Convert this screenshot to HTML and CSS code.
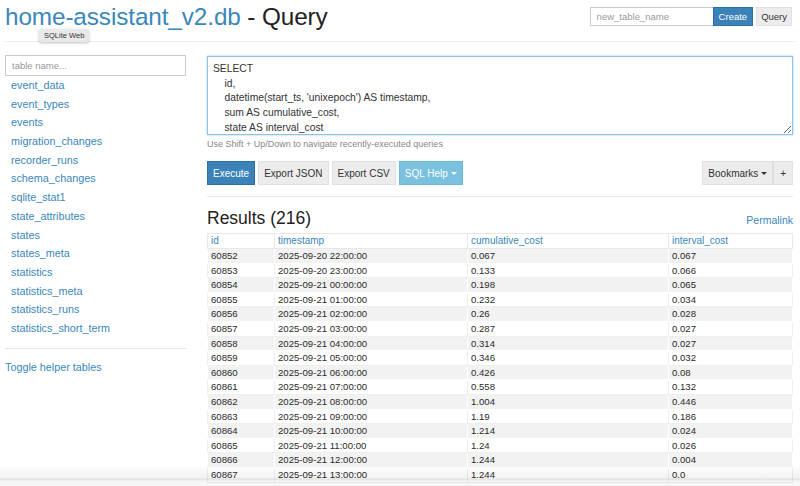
FILE: index.html
```html
<!DOCTYPE html>
<html>
<head>
<meta charset="utf-8">
<link rel="stylesheet" href="styles.css">
</head>
<body>
<header class="topbar">
  <div class="title-wrap">
    <h1 class="title"><a class="db" href="#">home-assistant_v2.db</a> - Query</h1>
    <span class="tooltip">SQLite Web</span>
  </div>
  <form class="create-form">
    <input class="new-table" type="text" placeholder="new_table_name">
    <button type="button" class="btn btn-primary btn-sm">Create</button>
    <button type="button" class="btn btn-default btn-sm query">Query</button>
  </form>
</header>
<div class="layout">
  <aside class="sidebar">
    <input class="filter" type="text" placeholder="table name...">
    <ul class="tables">
      <li><a href="#">event_data</a></li>
      <li><a href="#">event_types</a></li>
      <li><a href="#">events</a></li>
      <li><a href="#">migration_changes</a></li>
      <li><a href="#">recorder_runs</a></li>
      <li><a href="#">schema_changes</a></li>
      <li><a href="#">sqlite_stat1</a></li>
      <li><a href="#">state_attributes</a></li>
      <li><a href="#">states</a></li>
      <li><a href="#">states_meta</a></li>
      <li><a href="#">statistics</a></li>
      <li><a href="#">statistics_meta</a></li>
      <li><a href="#">statistics_runs</a></li>
      <li><a href="#">statistics_short_term</a></li>
    </ul>
    <hr class="side-rule">
    <a class="toggle" href="#">Toggle helper tables</a>
  </aside>
  <main class="main">
    <div class="sql-box">
      <textarea class="sql">SELECT
    id,
    datetime(start_ts, 'unixepoch') AS timestamp,
    sum AS cumulative_cost,
    state AS interval_cost</textarea>
    </div>
    <p class="hint">Use Shift + Up/Down to navigate recently-executed queries</p>
    <div class="toolbar">
      <div class="btn-row">
        <button type="button" class="btn btn-primary">Execute</button>
        <button type="button" class="btn btn-default">Export JSON</button>
        <button type="button" class="btn btn-default">Export CSV</button>
        <button type="button" class="btn btn-info">SQL Help <span class="caret"></span></button>
      </div>
      <div class="btn-group">
        <button type="button" class="btn btn-default">Bookmarks <span class="caret dark"></span></button>
        <button type="button" class="btn btn-default plus">+</button>
      </div>
    </div>
    <hr class="main-rule">
    <div class="results-head">
      <h3 class="results">Results (216)</h3>
      <a class="permalink" href="#">Permalink</a>
    </div>
    <table class="grid">
      <thead>
        <tr><th class="c1">id</th><th class="c2">timestamp</th><th class="c3">cumulative_cost</th><th>interval_cost</th></tr>
      </thead>
      <tbody>
        <tr><td>60852</td><td>2025-09-20 22:00:00</td><td>0.067</td><td>0.067</td></tr>
        <tr><td>60853</td><td>2025-09-20 23:00:00</td><td>0.133</td><td>0.066</td></tr>
        <tr><td>60854</td><td>2025-09-21 00:00:00</td><td>0.198</td><td>0.065</td></tr>
        <tr><td>60855</td><td>2025-09-21 01:00:00</td><td>0.232</td><td>0.034</td></tr>
        <tr><td>60856</td><td>2025-09-21 02:00:00</td><td>0.26</td><td>0.028</td></tr>
        <tr><td>60857</td><td>2025-09-21 03:00:00</td><td>0.287</td><td>0.027</td></tr>
        <tr><td>60858</td><td>2025-09-21 04:00:00</td><td>0.314</td><td>0.027</td></tr>
        <tr><td>60859</td><td>2025-09-21 05:00:00</td><td>0.346</td><td>0.032</td></tr>
        <tr><td>60860</td><td>2025-09-21 06:00:00</td><td>0.426</td><td>0.08</td></tr>
        <tr><td>60861</td><td>2025-09-21 07:00:00</td><td>0.558</td><td>0.132</td></tr>
        <tr><td>60862</td><td>2025-09-21 08:00:00</td><td>1.004</td><td>0.446</td></tr>
        <tr><td>60863</td><td>2025-09-21 09:00:00</td><td>1.19</td><td>0.186</td></tr>
        <tr><td>60864</td><td>2025-09-21 10:00:00</td><td>1.214</td><td>0.024</td></tr>
        <tr><td>60865</td><td>2025-09-21 11:00:00</td><td>1.24</td><td>0.026</td></tr>
        <tr><td>60866</td><td>2025-09-21 12:00:00</td><td>1.244</td><td>0.004</td></tr>
        <tr><td>60867</td><td>2025-09-21 13:00:00</td><td>1.244</td><td>0.0</td></tr>
      </tbody>
    </table>
  </main>
</div>
<div class="window-edge"></div>
</body>
</html>
```
FILE: styles.css
```css
* { box-sizing: border-box; }
html, body { margin: 0; padding: 0; background: #fff; overflow: hidden; }
body {
  font-family: "Liberation Sans", Arial, sans-serif;
  font-size: 10.5px;
  color: #333;
  width: 800px;
  height: 486px;
  position: relative;
}
a { color: #3a87b9; text-decoration: none; }

.topbar {
  display: flex;
  justify-content: space-between;
  align-items: flex-start;
  margin: 0 5px;
  height: 42px;
  border-bottom: 1px solid #eee;
}
.title-wrap { position: relative; }
.title {
  margin: 0;
  padding-top: 3px;
  font-weight: normal;
  font-size: 24.3px;
  line-height: 28px;
  color: #222;
  letter-spacing: -0.1px;
}
.title .db { color: #3a87b9; }
.tooltip {
  position: absolute;
  left: 34px;
  top: 29px;
  background: #e9e9e9;
  color: #333;
  font-size: 7.5px;
  padding: 2px 5px;
  border-radius: 2px;
  box-shadow: 0 1px 3px rgba(0,0,0,0.25);
  white-space: nowrap;
}
.create-form {
  display: flex;
  align-items: center;
  margin-top: 7px;
  margin-right: 3px;
}
.new-table {
  width: 123px;
  height: 19px;
  border: 1px solid #ccc;
  border-right: none;
  font: inherit;
  font-size: 9.5px;
  padding: 0 6px;
  color: #555;
}
.new-table::placeholder, .filter::placeholder { color: #999; }
.btn {
  font-family: inherit;
  font-size: 10px;
  border: 1px solid #e0e0e0;
  border-radius: 0;
  height: 24px;
  padding: 0 5px;
  color: #333;
  background: #eee;
  cursor: pointer;
  white-space: nowrap;
}
.btn-sm { height: 19px; font-size: 9.5px; padding: 0 5px; }
.btn-sm.query { padding: 0 4px; }
.btn-primary { background: #3a82b8; border-color: #2e6f9f; color: #fff; }
.btn-default { background: #ececec; border-color: #e2e2e2; }
.btn-info { background: #79c1de; border-color: #6bb8d8; color: #fff; }
.create-form .btn-primary { margin-right: 3px; }

.caret {
  display: inline-block;
  width: 0; height: 0;
  border-left: 3px solid transparent;
  border-right: 3px solid transparent;
  border-top: 3.5px solid #fff;
  vertical-align: 2px;
  margin-left: 0;
}
.caret.dark { border-top-color: #333; }

.layout {
  display: grid;
  grid-template-columns: 181px 586px;
  column-gap: 21px;
  margin: 0 5px;
  padding-top: 13px;
}
.sidebar { display: flex; flex-direction: column; }
.filter {
  width: 181px;
  height: 21px;
  border: 1px solid #ccc;
  font: inherit;
  font-size: 9.5px;
  padding: 0 6px;
}
.tables { list-style: none; margin: 0; padding: 0 0 0 6px; }
.tables li { height: 18.7px; line-height: 18.7px; font-size: 10.8px; }
.side-rule { border: 0; border-top: 1px solid #e6e6e6; margin: 10px 0 0; width: 181px; }
.toggle { margin-top: 12px; font-size: 10.8px; }

.main { display: flex; flex-direction: column; }
.sql-box {
  border: 1px solid #8fc3e6;
  box-shadow: 0 0 2px rgba(102,175,233,0.7);
  height: 79px;
  margin-top: 1px;
}
.sql {
  display: block;
  width: 100%;
  height: 100%;
  border: 0;
  outline: none;
  resize: vertical;
  font-family: "Liberation Sans", Arial, sans-serif;
  font-size: 10.3px;
  line-height: 14.7px;
  color: #333;
  padding: 5px 5px 2px;
  overflow: hidden;
}
.hint { margin: 3px 0 0; font-size: 9px; color: #888; line-height: 12px; }
.toolbar {
  display: flex;
  justify-content: space-between;
  margin-top: 11px;
}
.btn-row { display: flex; gap: 3px; }
.btn-group { display: flex; }
.btn-group .plus { padding: 0 6px; border-left: 1px solid #ddd; }
.main-rule { border: 0; border-top: 1px solid #e8e8e8; margin: 11px 0 0; }
.results-head {
  display: flex;
  justify-content: space-between;
  align-items: baseline;
  margin-top: 11px;
}
.results { margin: 0; font-weight: normal; font-size: 17.5px; line-height: 20px; color: #222; }
.permalink { font-size: 10.5px; }

.grid {
  margin-top: 5px;
  width: 586px;
  border-collapse: collapse;
  font-size: 9.6px;
  table-layout: fixed;
  border: 1px solid #e8e8e8;
  color: #2a2a2a;
}
.grid th, .grid td {
  text-align: left;
  padding: 0 3px;
  line-height: 13.6px;
  border: 1px solid #e8e8e8;
  white-space: nowrap;
}
.grid th { color: #3a87b9; font-weight: normal; line-height: 14px; font-size: 10px; }
.grid .c1 { width: 67px; }
.grid .c2 { width: 193px; }
.grid .c3 { width: 201px; }
.grid tbody tr:nth-child(odd) td { background: #f2f2f2; border-color: #fff; }
.grid tbody tr:nth-child(even) td { background: #fff; border-color: #efefef; }

.window-edge {
  position: absolute;
  left: 0;
  right: 0;
  bottom: 0;
  height: 22px;
  background: linear-gradient(to bottom, rgba(255,255,255,0) 0, rgba(0,0,0,0.05) 14px, rgba(0,0,0,0.12) 15px, rgba(0,0,0,0.04) 17px, rgba(0,0,0,0.03) 22px);
  pointer-events: none;
}
```
